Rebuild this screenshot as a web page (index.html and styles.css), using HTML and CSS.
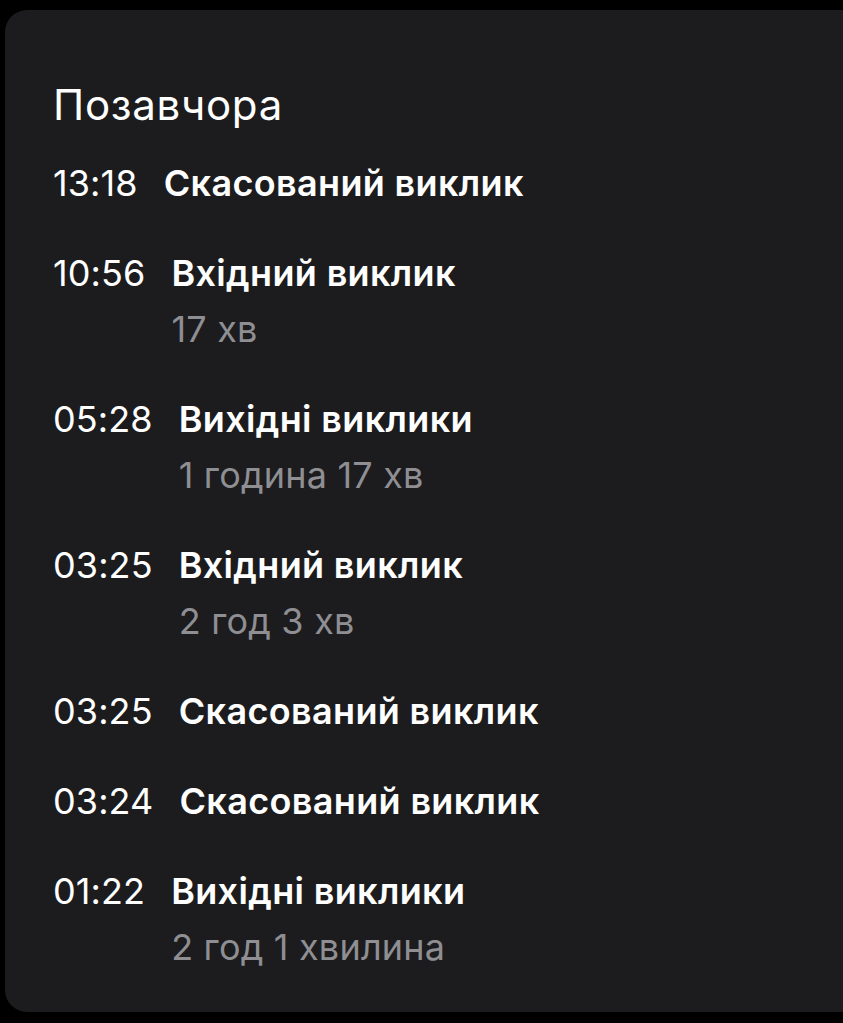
FILE: index.html
```html
<!DOCTYPE html>
<html lang="uk">
<head>
<meta charset="utf-8">
<link rel="stylesheet" href="styles.css">
</head>
<body>
<div class="card">
  <h1 class="heading">Позавчора</h1>
  <ul class="calls">
    <li class="call"><span class="time">13:18</span><div class="info"><span class="title">Скасований виклик</span></div></li>
    <li class="call"><span class="time">10:56</span><div class="info"><span class="title">Вхідний виклик</span><span class="sub">17 хв</span></div></li>
    <li class="call"><span class="time">05:28</span><div class="info"><span class="title">Вихідні виклики</span><span class="sub">1 година 17 хв</span></div></li>
    <li class="call"><span class="time">03:25</span><div class="info"><span class="title">Вхідний виклик</span><span class="sub">2 год 3 хв</span></div></li>
    <li class="call"><span class="time">03:25</span><div class="info"><span class="title">Скасований виклик</span></div></li>
    <li class="call"><span class="time">03:24</span><div class="info"><span class="title">Скасований виклик</span></div></li>
    <li class="call"><span class="time">01:22</span><div class="info"><span class="title">Вихідні виклики</span><span class="sub">2 год 1 хвилина</span></div></li>
  </ul>
</div>
</body>
</html>
```

FILE: styles.css
```css
html, body {
  margin: 0;
  padding: 0;
  background: #000;
  overflow: hidden;
}
body {
  width: 843px;
  height: 1023px;
  font-family: Inter, "Noto Sans", sans-serif;
  color: #fff;
}
.card {
  margin: 10px 0 0 5px;
  width: 838px;
  height: 1002px;
  box-sizing: border-box;
  background: #1c1c1e;
  border-radius: 22px 0 0 22px;
  padding: 71px 0 0 48px;
}
.heading {
  margin: 0;
  font-size: 42px;
  font-weight: 400;
  line-height: 48px;
  height: 48px;
  letter-spacing: 0.7px;
}
.calls {
  list-style: none;
  margin: 26px 0 0 0;
  padding: 0;
  display: flex;
  flex-direction: column;
  gap: 34px;
}
.call {
  display: flex;
  gap: 26px;
  align-items: flex-start;
}
.time {
  font-size: 36px;
  font-weight: 400;
  line-height: 56px;
  letter-spacing: 0.1px;
}
.info {
  display: flex;
  flex-direction: column;
}
.title {
  font-size: 36px;
  font-weight: 600;
  line-height: 56px;
  letter-spacing: 0.35px;
}
.sub {
  font-size: 36px;
  font-weight: 400;
  line-height: 56px;
  color: #8e8e93;
  letter-spacing: 0.2px;
}
```
